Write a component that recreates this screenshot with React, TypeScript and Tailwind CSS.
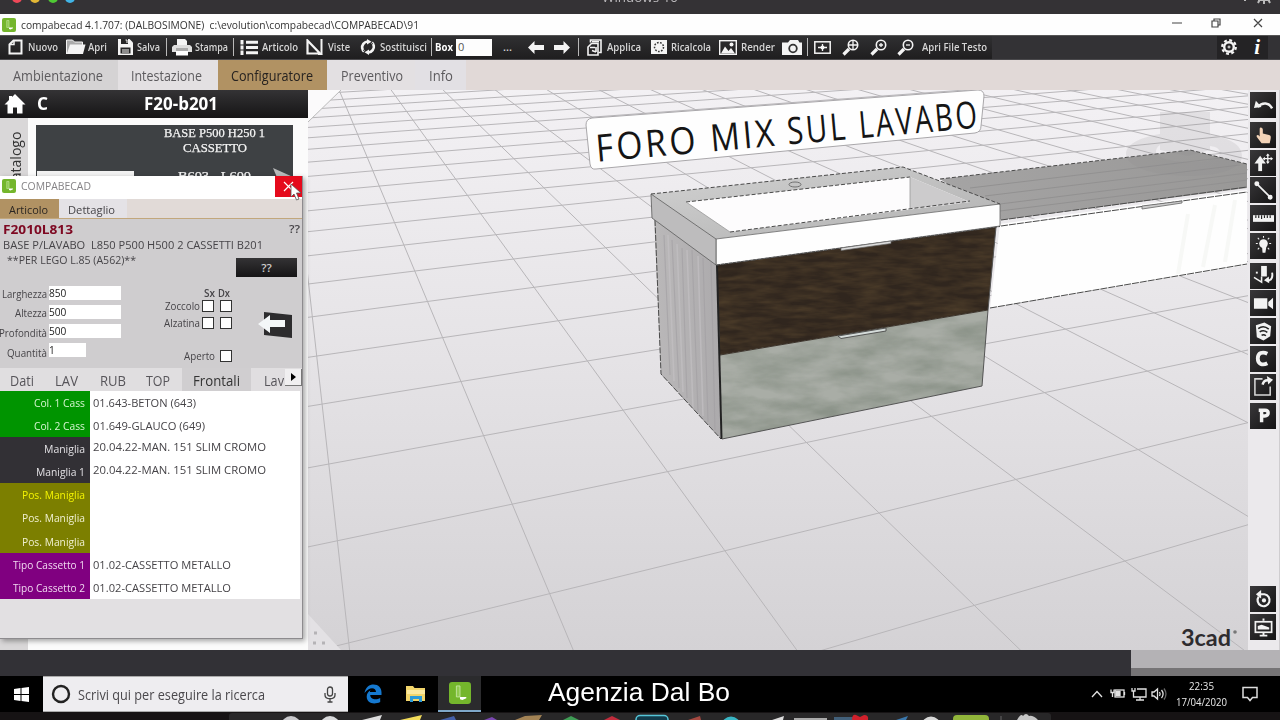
import React, { useLayoutEffect, useRef, useState } from "react";

type Kids = { children?: React.ReactNode };

/* One-line label condensed or stretched to a fixed width. */
function Fit({ w, children, className = "" }: { w: number; children: string; className?: string }) {
  const ref = useRef<HTMLSpanElement>(null);
  const [k, setK] = useState(1);
  useLayoutEffect(() => {
    if (ref.current && ref.current.offsetWidth) setK(w / ref.current.getBoundingClientRect().width);
  }, []);
  return (
    <span className={"inline-block shrink-0 whitespace-pre " + className} style={{ width: w }}>
      <span ref={ref} className="inline-block origin-left" style={{ transform: `scaleX(${k})` }}>
        {children}
      </span>
    </span>
  );
}

function Ico({ w, h, children, className = "" }: Kids & { w: number; h: number; className?: string }) {
  return (
    <svg width={w} height={h} viewBox={`0 0 ${w} ${h}`} className={"shrink-0 " + className} fill="none" stroke="#f4f4f4" strokeWidth="2">
      {children}
    </svg>
  );
}

function AppLogo({ className = "" }: { className?: string }) {
  return (
    <svg viewBox="0 0 14 14" className={"shrink-0 " + className}>
      <rect width="14" height="14" rx="2" fill="#74b62c" />
      <path d="M4.700 2.500H7V9.500H4.700z" fill="#8fca4e" stroke="#cfeab0" strokeWidth=".5" />
      <path d="M7 9.500h4v.8L8.500 11.500 7 11z" fill="#fff" />
    </svg>
  );
}

/* ---------- toolbar ---------- */

function Sep() {
  return <div className="h-[18px] w-px shrink-0 bg-[#b9b9b9]" />;
}

function Cell({ w, children }: Kids & { w: string }) {
  return <div className={"flex h-full shrink-0 items-center " + w}>{children}</div>;
}

function Magnifier({ kind }: { kind: string }) {
  return (
    <Ico w={17} h={17}>
      <path d="M1.500 15.500L7 10" strokeWidth="3.200" />
      <circle cx="11" cy="6" r="4.700" strokeWidth="1.600" />
      <path d={kind === "all" ? "M11 2v8M7 6h8" : kind === "in" ? "M11 4v4M9 6h4" : "M9 6h4"} strokeWidth="1.300" />
    </Ico>
  );
}

function Toolbar() {
  return (
    <div className="flex h-[25px] items-center border-t border-b border-t-[#555] border-b-[#4a494c] bg-[#333235] text-[11px] font-semibold text-[#d6d6d6]">
      <div className="flex h-full w-[992px] shrink-0 items-center bg-linear-to-b from-[#303032] to-[#1f1e1f] pb-px pl-2">
        <Cell w="w-[20px]">
          <Ico w={15} h={16}><path d="M5.500 1.500H13.500V14.500H1.500V5.500z" /><path d="M2 5.500h4V2" strokeWidth="1.500" /></Ico>
        </Cell>
        <Cell w="w-[38px]"><Fit w={30}>Nuovo</Fit></Cell>
        <Cell w="w-[22px]">
          <Ico w={20} h={16}><path d="M.5 15V1h6l2 2h8v3" strokeWidth="1" fill="#aaa" /><path d="M.8 15L4 5.500h15.500L17 15z" fill="#f4f4f4" stroke="none" /></Ico>
        </Cell>
        <Cell w="w-[30px]"><Fit w={19}>Apri</Fit></Cell>
        <Cell w="w-[19px]">
          <Ico w={15} h={16}><path d="M0 0h11.500L15 3.500V16H0z" fill="#f4f4f4" stroke="none" /><path d="M3 0h7v5H3zM2.500 8.500h10v6h-10z" fill="#262627" stroke="none" /><path d="M7.500 1h1.500v3M4 11h7M4 13h7" strokeWidth="1" /></Ico>
        </Cell>
        <Cell w="w-[29px]"><Fit w={23}>Salva</Fit></Cell>
        <Cell w="w-[6px]"><Sep /></Cell>
        <Cell w="w-[23px]">
          <Ico w={20} h={17}><path d="M5 0h8l2 2v5H5z" fill="#f4f4f4" stroke="none" /><path d="M2 6h16l2 2v5H0V8z" fill="#dedede" stroke="none" /><path d="M4 9h12v5H4z" fill="#aaa" stroke="none" /><path d="M4 12h12v4.500H4z" fill="#fff" stroke="none" /></Ico>
        </Cell>
        <Cell w="w-[38px]"><Fit w={33}>Stampa</Fit></Cell>
        <Cell w="w-[7px]"><Sep /></Cell>
        <Cell w="w-[22px]">
          <Ico w={18} h={15}><path d="M6 2.200h12M6 7.500h12M6 12.800h12" strokeWidth="3" /><path d="M2 0v15" strokeWidth="3" /><path d="M0 5h4M0 10h4" stroke="#262627" strokeWidth="1" /></Ico>
        </Cell>
        <Cell w="w-[44px]"><Fit w={36}>Articolo</Fit></Cell>
        <Cell w="w-[22px]">
          <Ico w={17} h={16}><path d="M1.500 1.500L14 14.500H1.500z" strokeWidth="2.200" /><path d="M15.500 0v15H12" strokeWidth="2" /></Ico>
        </Cell>
        <Cell w="w-[32px]"><Fit w={22}>Viste</Fit></Cell>
        <Cell w="w-[20px]">
          <Ico w={16} h={16}><path d="M2.200 9.500A6 6 0 0 1 7.500 2.500M13.800 6.500A6 6 0 0 1 8.500 13.500M4 12.500A6 6 0 0 1 2.200 9M12 3.500A6 6 0 0 1 13.800 7" strokeWidth="2.600" /><path d="M7 0l4.500 2.700L7 5.500zM9 10.500L4.500 13.300 9 16z" fill="#f4f4f4" stroke="none" /><path d="M3 11.500l3-1.500M13 4.500l-3 1.500" stroke="#262627" strokeWidth="1" /></Ico>
        </Cell>
        <Cell w="w-[51px]"><Fit w={47}>Sostituisci</Fit></Cell>
        <Cell w="w-[4px]"><Sep /></Cell>
        <Cell w="w-[21px]"><Fit w={18} className="font-bold text-white">Box</Fit></Cell>
        <Cell w="w-[47px]">
          <div className="flex h-[17px] w-[36px] items-center bg-[#fdfdfd] pl-0.5 font-normal text-[#555]">0</div>
        </Cell>
        <Cell w="w-[25px]">...</Cell>
        <Cell w="w-[26px]">
          <Ico w={16} h={13}><path d="M0 6.500L6.500 0v4H16v5H6.500v4z" fill="#f4f4f4" stroke="none" /></Ico>
        </Cell>
        <Cell w="w-[24px]">
          <Ico w={16} h={13}><path d="M16 6.500L9.500 0v4H0v5h9.500v4z" fill="#f4f4f4" stroke="none" /></Ico>
        </Cell>
        <Cell w="w-[9px]"><Sep /></Cell>
        <Cell w="w-[20px]">
          <Ico w={15} h={17}><path d="M3.500 3.500V1H14v12.500h-2.500" strokeWidth="1.600" /><path d="M1 8l3.500-3.500H11V16H1z" strokeWidth="1.600" /><path d="M3 8.500h5M9 8v5M5 11.500l4 1.500M5 2.700h7" strokeWidth="1.600" /></Ico>
        </Cell>
        <Cell w="w-[44px]"><Fit w={34}>Applica</Fit></Cell>
        <Cell w="w-[20px]">
          <Ico w={16} h={14}><rect width="16" height="14" fill="#f4f4f4" stroke="none" /><circle cx="8" cy="7" r="4.500" stroke="#333" strokeWidth="1.500" strokeDasharray="1.700 1.400" /></Ico>
        </Cell>
        <Cell w="w-[48px]"><Fit w={40}>Ricalcola</Fit></Cell>
        <Cell w="w-[22px]">
          <Ico w={18} h={15}><rect x=".7" y=".7" width="16.600" height="13.600" strokeWidth="1.400" /><path d="M2 13.500l4-7 3.500 4.500 2.500-3 4 5.500z" fill="#f4f4f4" stroke="none" /><circle cx="12.500" cy="4.500" r="2" fill="#f4f4f4" stroke="none" /></Ico>
        </Cell>
        <Cell w="w-[41px]"><Fit w={34}>Render</Fit></Cell>
        <Cell w="w-[25px]">
          <Ico w={20} h={15}><path d="M0 2.500h6L8 0h8l1.500 2.500H20V15H0z" fill="#f4f4f4" stroke="none" /><circle cx="11" cy="8.500" r="3.800" stroke="#333" strokeWidth="1.800" /></Ico>
        </Cell>
        <Cell w="w-[7px]"><Sep /></Cell>
        <Cell w="w-[28px]">
          <Ico w={17} h={13}><rect x=".8" y=".8" width="15.400" height="11.400" strokeWidth="1.500" /><path d="M8.500 3v7M4 6.500h9" strokeWidth="1.300" /><circle cx="8.500" cy="6.500" r="2" fill="#f4f4f4" stroke="none" /></Ico>
        </Cell>
        <Cell w="w-[28px]"><Magnifier kind="all" /></Cell>
        <Cell w="w-[27px]"><Magnifier kind="in" /></Cell>
        <Cell w="w-[25px]"><Magnifier kind="out" /></Cell>
        <Fit w={65}>Apri File Testo</Fit>
      </div>
      <div className="flex-1" />
      <div className="mr-3 flex h-full w-[51px] items-center justify-between bg-[#242325] pr-[8px] pb-px pl-[4px]">
        <Ico w={16} h={16}><circle cx="8" cy="8" r="4.800" strokeWidth="2.400" /><circle cx="8" cy="8" r="6.800" strokeWidth="2.200" strokeDasharray="2.900 2.440" /><circle cx="8" cy="8" r="1" strokeWidth="1" /></Ico>
        <span className="font-['Liberation_Serif',serif] text-[21px] leading-none font-bold text-white italic">i</span>
      </div>
    </div>
  );
}

function MenuTabs() {
  return (
    <div className="flex h-[30px] bg-[#e1d9d7] text-[14px] text-[#5c5a5d]">
      <div className="flex w-[118px] items-center bg-[#d5d3d4] pl-[13px]"><Fit w={90}>Ambientazione</Fit></div>
      <div className="flex w-[100px] items-center bg-[#e3e0e2] pl-[13px]"><Fit w={71}>Intestazione</Fit></div>
      <div className="flex w-[109px] items-center bg-[#b19263] pl-[13px] text-[#262220]"><Fit w={82}>Configuratore</Fit></div>
      <div className="flex w-[88px] items-center bg-[#e3e0e2] pl-[14px]"><Fit w={62}>Preventivo</Fit></div>
      <div className="flex w-[51px] items-center bg-[#e2e0e4] pl-[14px]"><Fit w={24}>Info</Fit></div>
    </div>
  );
}

/* ---------- 3D viewport ---------- */

const HORIZON = -80;

function floorLines() {
  const out: string[] = [];
  const vx = 268;
  for (let k = -1; k < 22; k++) {
    const x640 = 348.5 + 220.5 * k;
    const s = (x640 - vx) / (640 - HORIZON);
    out.push(`M${(vx + s * 165).toFixed(1)} 85L${(vx + s * 740).toFixed(1)} 660`);
  }
  const ax = 3300;
  for (let m = -24; m < 4; m++) {
    const d = 1000 / (2.008 - 0.2535 * m);
    const s = d / (ax - 580);
    out.push(`M300 ${(HORIZON + s * (ax - 300)).toFixed(1)}L1260 ${(HORIZON + s * (ax - 1260)).toFixed(1)}`);
  }
  return out.join("");
}

const caption = [
  { t: "FORO", x: -2, w: 103 },
  { t: "MIX", x: 113, w: 67 },
  { t: "SUL", x: 190, w: 61 },
  { t: "LAVABO", x: 262, w: 121 },
];

function Viewport() {
  const dash = { stroke: "#4a4a4a", strokeWidth: 1, strokeDasharray: "4 2", fill: "none" };
  return (
    <svg width="940" height="560" viewBox="308 90 940 560" className="shrink-0">
      <defs>
        <linearGradient id="floor" x1="0" y1="0" x2="0" y2="1">
          <stop offset="0" stopColor="#f3f1f4" /><stop offset=".45" stopColor="#e6e4e7" /><stop offset="1" stopColor="#d4d2d5" />
        </linearGradient>
        <linearGradient id="top" x1="0" y1="0" x2="1" y2="0">
          <stop offset="0" stopColor="#a5a4a4" /><stop offset="1" stopColor="#999897" />
        </linearGradient>
        <linearGradient id="side" x1="0" y1="0" x2="1" y2="0">
          <stop offset="0" stopColor="#bab8b9" /><stop offset="1" stopColor="#acaaac" />
        </linearGradient>
        <linearGradient id="slab" x1="0" y1="0" x2="1" y2="1">
          <stop offset="0" stopColor="#d2d2d2" /><stop offset="1" stopColor="#b0b0b0" />
        </linearGradient>
        <filter id="woodDark" x="0" y="0" width="1" height="1" colorInterpolationFilters="sRGB">
          <feTurbulence type="fractalNoise" baseFrequency=".035 .16" numOctaves="3" seed="4" />
          <feColorMatrix values="0 0 0 0 .34  0 0 0 0 .27  0 0 0 0 .18  1.200 0 0 0 -.35" />
          <feComposite in2="SourceGraphic" operator="in" result="n" />
          <feMerge><feMergeNode in="SourceGraphic" /><feMergeNode in="n" /></feMerge>
        </filter>
        <filter id="woodLight" x="0" y="0" width="1" height="1" colorInterpolationFilters="sRGB">
          <feTurbulence type="fractalNoise" baseFrequency=".02 .06" numOctaves="4" seed="9" />
          <feColorMatrix values="0 0 0 0 .54  0 0 0 0 .57  0 0 0 0 .53  1.800 0 0 0 -.55" />
          <feComposite in2="SourceGraphic" operator="in" result="n" />
          <feMerge><feMergeNode in="SourceGraphic" /><feMergeNode in="n" /></feMerge>
        </filter>
      </defs>
      <rect x="308" y="90" width="940" height="560" fill="url(#floor)" />
      <path d={floorLines()} stroke="#b8b6b9" strokeWidth="1" fill="none" />
      <path d="M308 90H341L308 122z" fill="#fbfafb" /><path d="M341 90L308 122" stroke="#bbb" />
      <path d="M308 614L341 650H308z" fill="#e3e1e4" />
      <path d="M314 633h3M313 643h3M322 643h3" stroke="#b5b3b6" strokeWidth="3" />

      {/* wall unit on the right */}
      <path d="M1000 224L1247 190V265L990 308z" fill="#fefefe" />
      <path d="M940 179L1190 150L1247 164V188L1001 220z" fill="url(#top)" />
      <path d="M985 196L1240 165M1000 204L1247 173M1000 211L1247 180M970 188L1220 158" stroke="#929191" strokeWidth="1" />
      <path d="M940 179L1190 150L1247 164" {...dash} />
      <path d="M1001 220L1247 187M1001 226L1247 192M990 308L1247 264" {...dash} strokeDasharray="7 1" />
      <path d="M1142 209l40-6v-2l-40 5z" fill="#ccc" stroke="#666" strokeWidth=".8" />
      <path d="M1188 214l-10 60M1215 205l-12 62M1235 200l-10 62" stroke="#f7f8f6" strokeWidth="4" />

      {/* orientation cube */}
      <g fill="#8b898c" opacity=".15">
        <path d="M1160 112h50v38l-22 6-28-6z" /><path d="M1160 112h25v42l-25-5z" />
        <path d="M1160 134c-24 4-34 12-34 20 0 14 30 22 64 22s52-9 52-20-12-18-32-21v11c8 1 10 4 10 7 0 6-14 9-30 9s-34-4-34-10c0-3 1-5 4-7z" />
      </g>

      {/* washbasin unit */}
      <path d="M654 215L717 262L721 439L661 374z" fill="url(#side)" />
      <path d="M664 235l6 140M672 240l7 148M682 248l5 150M692 250l6 162M703 258l5 164M711 262l4 168" stroke="#a19ea2" strokeWidth="1.200" opacity=".6" />
      <path d="M668 235l6 146M677 244l6 148M687 250l6 158M698 256l5 160" stroke="#c3c0c3" strokeWidth="1.500" opacity=".7" />
      <path d="M655 220L661 374L721 439" {...dash} strokeDasharray="6 1.500" />
      <path d="M717 265L996 227L988 310L720 355z" fill="#30261e" filter="url(#woodDark)" />
      <path d="M720 355L988 310L982 386L722 439z" fill="#a9ada6" filter="url(#woodLight)" />
      <path d="M717 265L721.500 439" stroke="#222" strokeWidth="2" />
      <path d="M996 227L988 310L982 386L722 439" stroke="#555" fill="none" strokeWidth="1" />
      <path d="M720 355L988 310" stroke="#3d352d" strokeWidth="1" />
      <path d="M651 194L903 167L1000 204L716 239z" fill="url(#slab)" />
      <path d="M686 202L910 177L970 202L730 232z" fill="#fdfcfd" />
      <path d="M910 177L970 202L910 209z" fill="#cccbcc" />
      <path d="M716 239L1000 204V226L716 265z" fill="#fefefe" stroke="#666" strokeWidth=".8" />
      <path d="M651 194L716 239V265L652 218z" fill="#bdbcbd" stroke="#666" strokeWidth=".9" />
      <path d="M651 194L903 167L1000 204M686 202L910 177M730 232L970 201" {...dash} />
      <path d="M686 202L730 232M910 177v31" stroke="#999" strokeWidth=".8" />
      <ellipse cx="795" cy="184.500" rx="6" ry="2.500" fill="#c4c4c4" stroke="#666" strokeWidth=".9" />
      <path d="M717 265L1000 226.500" {...dash} strokeDasharray="3 1" />
      <path d="M841 248l50-7v2.500l-50 7z" fill="#ddd" stroke="#666" strokeWidth=".7" />
      <path d="M838 336l48-8v3l-45 7.500z" fill="#d5dcda" stroke="#4a4a48" strokeWidth=".9" />

      {/* floating caption */}
      <path d="M592 118L978 90Q984 90 984 96L981 126Q981 132 975 133L596 169Q591 170 590 164L586 125Q586 119 592 118z" fill="#fefefe" stroke="#a9a7aa" strokeWidth="1" />
      <g transform="translate(599 161.500) rotate(-5.100)">
        {caption.map((c) => (
          <text key={c.t} x={c.x} y="0" textLength={c.w} lengthAdjust="spacingAndGlyphs" letterSpacing="3.500" fontSize="37.500" fill="#151515" fontFamily="'Open Sans','Noto Sans',sans-serif">
            {c.t}
          </text>
        ))}
      </g>

      {/* 3cad mark */}
      <text x="1181" y="646" textLength="50" lengthAdjust="spacingAndGlyphs" fontSize="22" fontWeight="700" fill="#2e2c2f" fontFamily="Lato,sans-serif">3cad</text>
      <circle cx="1235" cy="632" r="1.800" fill="#777" />
    </svg>
  );
}

/* ---------- side rail ---------- */

function RailBtn({ children, gap = "mt-[1.7px]" }: Kids & { gap?: string }) {
  return (
    <div className={"flex h-[26px] w-[26px] shrink-0 items-center justify-center bg-linear-to-br from-[#39383a] to-[#151415] " + gap}>
      <svg width="21" height="21" viewBox="0 0 22 22" fill="none" stroke="#f2f2f2" strokeWidth="2">{children}</svg>
    </div>
  );
}

function Rail() {
  return (
    <div className="flex w-8 shrink-0 flex-col border-r border-[#cfcdd0] bg-[#ebe9ec] pl-0.5">
      <RailBtn gap="mt-[2px]"><path d="M5 12.500C10 7 17 8 20 14" strokeWidth="2.600" /><path d="M1 13.500L3 6l6 6.500z" fill="#f2f2f2" stroke="none" /></RailBtn>
      <RailBtn gap="mt-[4px]"><path d="M8 2.500c1.700 0 2.300 1 2.300 2.500v4l6.500 1.500c2 .5 2 2 1.700 4L17.500 19H9L4 12.500c-.8-1.500.6-2.500 2-1.500l1 1V5c0-1.500 0-2.500 1-2.500z" fill="#f3d3b8" stroke="none" /></RailBtn>
      <RailBtn><path d="M7.500 20V10" strokeWidth="4" /><path d="M1.500 12L7.500 4l6 8z" fill="#f2f2f2" stroke="none" /><path d="M15.500 2.500v9M11 7h9" strokeWidth="1.400" /><path d="M13.500 4l2-2.500 2 2.500zM13.500 10l2 2.500 2-2.500zM12.500 5L10 7l2.500 2zM18.500 5L21 7l-2.500 2z" fill="#f2f2f2" stroke="none" /></RailBtn>
      <RailBtn><path d="M4 4L18 18" strokeWidth="1.800" /><circle cx="4" cy="4" r="1.600" fill="#f2f2f2" /><circle cx="18" cy="18" r="1.600" fill="#f2f2f2" /></RailBtn>
      <RailBtn><path d="M0 7.500h22v7H0z" fill="#f2f2f2" stroke="none" /><path d="M3 7.500v3M6 7.500v3M9 7.500v4M12 7.500v3M15 7.500v3M18 7.500v3" stroke="#222" strokeWidth="1.200" /></RailBtn>
      <RailBtn><circle cx="11" cy="9" r="4.500" fill="#f2f2f2" stroke="none" /><path d="M9.500 12h4.500l-1 6.500h-3z" fill="#f2f2f2" stroke="none" /><path d="M3 9h2M17 9h2M5 3l1.500 1.500M17 3l-1.500 1.500M5 15l1.500-1.500M17 15l-1.500-1.500M11 1v2" strokeWidth="1.100" /></RailBtn>
      <RailBtn gap="mt-[4px]"><path d="M8.500 1h6v11h-6z" fill="#f2f2f2" stroke="none" /><path d="M1 13l8 5V12" strokeWidth="1.600" /><path d="M20 8c1 5-1 8-5 9" strokeWidth="2" /><path d="M11.500 16l5-4 .5 7z" fill="#f2f2f2" stroke="none" /><path d="M3 8h2" /></RailBtn>
      <RailBtn><path d="M1 5.500h14v11H1zM16 9.500L21 5v12l-5-4z" fill="#f2f2f2" stroke="none" /></RailBtn>
      <RailBtn><path d="M3 4.500L12 1.500l7 4-1 10.500-7 4.500-7-3.500z" fill="#f2f2f2" stroke="none" /><path d="M5.500 8c4-3 8-2 11 .5M7 11.500c3-2 5.500-1.500 8 .5M9 15c1.500-1 3-.8 4.500.5" stroke="#222" strokeWidth="1.600" /></RailBtn>
      <RailBtn><path d="M15 6C10 3.500 5 5 5 11s5 7.500 10 5" strokeWidth="4" /></RailBtn>
      <RailBtn><path d="M10 3H2v17h16V11" strokeWidth="1.600" stroke="#d8d8d8" /><path d="M10 9c1-3.500 3.500-5 6.500-4.500" strokeWidth="2.600" /><path d="M14.500 0L21 4l-5 5z" fill="#f2f2f2" stroke="none" /></RailBtn>
      <RailBtn gap="mt-[3px]"><path d="M9 18V5.500h3.500c4.500 0 4.500 6 0 6H9M6 5.500h3" strokeWidth="3.600" /></RailBtn>
      <div className="flex-1" />
      <RailBtn><path d="M6 8a6.300 6.300 0 1 0 6-2.500H7" strokeWidth="2.300" /><path d="M8.500 1v9L3 5.500z" fill="#f2f2f2" stroke="none" /><circle cx="11.500" cy="12" r="2.200" fill="#f2f2f2" stroke="none" /></RailBtn>
      <RailBtn><rect x="2.500" y="5" width="17" height="11" strokeWidth="1.800" /><path d="M5 13V9.500l4-1.500 8 3V13z" fill="#f2f2f2" stroke="none" /><path d="M11 1.500V4M11 16v3M7 19.500h8" strokeWidth="2" /></RailBtn>
      <div className="h-[10px] shrink-0" />
    </div>
  );
}

/* ---------- catalogue panel and article window ---------- */

function Catalog() {
  return (
    <div className="flex h-full w-[308px] shrink-0 flex-col bg-[#fbfbfb]">
      <div className="flex h-7 items-center bg-linear-to-b from-[#343335] to-[#161516] text-[17px] font-bold text-white">
        <svg width="22" height="20" viewBox="0 0 22 20" className="ml-1"><path d="M11 0l10.500 10.500H18.500V19.500H13v-6H9v6H3.500V10.500H.5L5 6V2h3v1z" fill="#fff" /></svg>
        <div className="ml-[11px] w-[107px]"><Fit w={11}>C</Fit></div>
        <Fit w={74}>F20-b201</Fit>
      </div>
      <div className="flex min-h-0 flex-1">
        <div className="flex w-7 justify-center overflow-hidden bg-[#d9d7d8] pt-[9px] pl-1 text-[14px] leading-[16px] text-[#333]">
          <span className="h-[62px] rotate-180 [writing-mode:vertical-rl]">Catalogo</span>
        </div>
        <div className="flex-1 pt-[7px] pl-2">
          <div className="flex h-[70px] w-[257px] bg-[#3e4144]">
            <div className="mt-[46px] ml-px h-[10px] w-[97px] shrink-0 bg-[#f2f2f2]" />
            <div className="ml-[30px] flex w-[101px] shrink-0 flex-col items-center pt-px font-['Liberation_Serif',serif] text-[12.500px] leading-[15px] text-[#f4f4f4] [-webkit-text-stroke:0.25px_#f4f4f4]">
              <Fit w={101}>BASE P500 H250 1</Fit>
              <Fit w={64}>CASSETTO</Fit>
              <Fit w={73} className="mt-[13px]">B603 - L600</Fit>
            </div>
            <svg width="22" height="14" viewBox="0 0 22 14" className="mt-[43px] ml-[6px] shrink-0"><path d="M2 0L22 9L8 14z" fill="#b9babb" /></svg>
          </div>
        </div>
      </div>
    </div>
  );
}

function Check() {
  return <span className="block size-3 shrink-0 border border-[#333] bg-white" />;
}

function Field({ label, lw, value, pad, box }: { label: string; lw: number; value: string; pad: string; box: string }) {
  return (
    <div className="flex h-[19px] items-start">
      <div className={"flex w-[49px] shrink-0 justify-end pr-0.5 leading-[14px] " + pad}><Fit w={lw}>{label}</Fit></div>
      <div className={"flex h-[14px] items-center bg-white text-[11px] text-[#222] " + box}><Fit w={value.length * 5.8}>{value}</Fit></div>
    </div>
  );
}

const rows = [
  { n: "Col. 1 Cass", nw: 51, v: "01.643-BETON (643)", vw: 103, c: "bg-[#009400] text-[#d5f5d0]" },
  { n: "Col. 2 Cass", nw: 51, v: "01.649-GLAUCO (649)", vw: 112, c: "bg-[#009400] text-[#d5f5d0]" },
  { n: "Maniglia", nw: 41, v: "20.04.22-MAN. 151 SLIM CROMO", vw: 173, c: "bg-[#323035] text-[#e2e0e4]", up: true },
  { n: "Maniglia 1", nw: 49, v: "20.04.22-MAN. 151 SLIM CROMO", vw: 173, c: "bg-[#323035] text-[#e2e0e4]", up: true },
  { n: "Pos. Maniglia", nw: 63, v: "", vw: 0, c: "bg-[#7c7f00] text-[#f4f400]" },
  { n: "Pos. Maniglia", nw: 63, v: "", vw: 0, c: "bg-[#7c7f00] text-[#f0f0d0]" },
  { n: "Pos. Maniglia", nw: 63, v: "", vw: 0, c: "bg-[#7c7f00] text-[#f0f0d0]" },
  { n: "Tipo Cassetto 1", nw: 72, v: "01.02-CASSETTO METALLO", vw: 138, c: "bg-[#800080] text-[#f0d8f0]" },
  { n: "Tipo Cassetto 2", nw: 72, v: "01.02-CASSETTO METALLO", vw: 138, c: "bg-[#800080] text-[#f0d8f0]" },
];

function ArticleWindow() {
  return (
    <div className="absolute top-[86px] left-0 flex h-[463px] w-[303px] flex-col border-r border-b border-[#8d8b8e] bg-[#e2e0e2] text-[11.500px] text-[#464448] shadow-[2px_2px_5px_rgba(0,0,0,.35)]">
      <div className="flex h-[23px] shrink-0 items-start bg-white pt-[3px] pl-0.5">
        <AppLogo className="size-[14px]" />
        <div className="ml-[5px] flex-1 leading-[14px] text-[#858386]"><Fit w={70}>COMPABECAD</Fit></div>
        <div className="-mt-[3px] flex h-[21px] w-[27px] items-center justify-center bg-[#e50a1c]">
          <svg width="11" height="11" viewBox="0 0 11 11" stroke="#fff" strokeWidth="1.200"><path d="M1 1l9 9M10 1l-9 9" /></svg>
        </div>
      </div>
      <div className="flex h-[20px] shrink-0 border-b border-[#c2a77c] bg-[#e1dad7]">
        <div className="flex w-[59px] items-center bg-[#b19263] pt-[3px] pl-[9px] text-[#2b2622]"><Fit w={39}>Articolo</Fit></div>
        <div className="flex w-[68px] items-center bg-[#e4e2e6] pt-[3px] pl-[9px]"><Fit w={47}>Dettaglio</Fit></div>
      </div>
      <div className="flex h-[149px] shrink-0 flex-col bg-[#cfcdcf]">
        <div className="flex h-[18px] items-center justify-between pr-[2px] pl-[3px] pt-1">
          <Fit w={70} className="text-[13px] font-bold text-[#7e0822]">F2010L813</Fit>
          <Fit w={11} className="-mt-[3px] font-semibold">??</Fit>
        </div>
        <div className="flex h-4 items-center pl-[3px]"><Fit w={260}>BASE P/LAVABO  L850 P500 H500 2 CASSETTI B201</Fit></div>
        <div className="flex h-[15px] items-center pb-px pl-[7px]"><Fit w={129}>**PER LEGO L.85 (A562)**</Fit></div>
        <div className="-mt-[10px] flex justify-end pr-[5px]">
          <div className="flex h-[19px] w-[61px] items-center justify-center bg-linear-to-b from-[#343335] to-[#161516] font-semibold text-[#ccc]">??</div>
        </div>
        <div className="flex pt-[9px]">
          <div className="w-[160px] shrink-0 overflow-hidden">
            <Field label="Larghezza" lw={45} value="850" pad="pt-[1px]" box="w-[72px]" />
            <Field label="Altezza" lw={32} value="500" pad="pt-[1px]" box="w-[72px]" />
            <Field label="Profondità" lw={48} value="500" pad="pt-[2px]" box="w-[72px]" />
            <Field label="Quantità" lw={40} value="1" pad="pt-[3px]" box="w-[37px]" />
          </div>
          <div className="w-[71.500px] shrink-0">
            <div className="flex h-[13px] items-center gap-[3px] pt-px pl-[44px] font-semibold"><Fit w={11}>Sx</Fit><Fit w={12}>Dx</Fit></div>
            <div className="-mt-px flex h-[15px] items-center justify-end gap-[6px]"><Fit w={35} className="-mr-1">Zoccolo</Fit><Check /><Check /></div>
            <div className="mt-px flex h-[18px] items-center justify-end gap-[6px]"><Fit w={36} className="-mr-1">Alzatina</Fit><Check /><Check /></div>
            <div className="mt-[15px] flex h-[18px] items-center justify-end gap-[5px]"><Fit w={31}>Aperto</Fit><Check /></div>
          </div>
          <svg width="38" height="30" viewBox="0 0 38 30" className="mt-[24px] ml-[25px]">
            <path d="M7 2l28 3v23L7 25z" fill="#2d2c2e" /><path d="M1 14l12-9v5h15v7H13v6z" fill="#f4f7f8" />
          </svg>
        </div>
      </div>
      <div className="flex h-[23px] shrink-0 items-center bg-[#e0dee0] text-[14px] text-[#57555a]">
        <div className="w-[45px] pt-0.5 pl-[10px]"><Fit w={24}>Dati</Fit></div>
        <div className="w-[45px] pt-0.5 pl-[10px]"><Fit w={23}>LAV</Fit></div>
        <div className="w-[46px] pt-0.5 pl-[10px]"><Fit w={26}>RUB</Fit></div>
        <div className="w-[46px] pt-0.5 pl-[10px]"><Fit w={24}>TOP</Fit></div>
        <div className="flex h-full w-[69px] items-center bg-[#d0ced0] pt-0.5 pl-[11px] text-[#333]"><Fit w={47}>Frontali</Fit></div>
        <div className="w-[34px] overflow-hidden pt-0.5 pl-[13px]"><Fit w={20}>Lav</Fit></div>
        <div className="-mt-[5px] flex size-[17px] items-center justify-center border-r border-b border-[#777] bg-[#f0eff0] text-black">
          <svg width="5" height="8" viewBox="0 0 5 8"><path d="M0 0l5 4-5 4z" /></svg>
        </div>
      </div>
      <div className="mr-[2px] flex h-[208px] shrink-0 flex-col bg-white">
        {rows.map((r, i) => (
          <div key={i} className="flex min-h-0 flex-1">
            <div className={"flex w-[90px] items-center justify-end pr-[5px] " + r.c}><Fit w={r.nw}>{r.n}</Fit></div>
            <div className={"flex items-center pl-[3px] " + (r.up ? "pb-1" : "")}>{r.v && <Fit w={r.vw}>{r.v}</Fit>}</div>
          </div>
        ))}
      </div>
    </div>
  );
}

/* ---------- desktop bars ---------- */

function Taskbar() {
  return (
    <div className="flex h-[36px] shrink-0 items-center bg-black">
      <div className="flex w-[43px] justify-center">
        <svg width="15" height="15" viewBox="0 0 15 15" fill="#fff"><path d="M0 2l6.500-1v6H0zM7.500 .9L15 0v7H7.500zM0 8h6.500v6L0 13zM7.500 8H15v7l-7.500-1z" /></svg>
      </div>
      <div className="flex h-full w-[305px] items-center border-y border-[#aaa] bg-[#eeedf0] pl-[8px]">
        <svg width="20" height="20" viewBox="0 0 20 20"><circle cx="10" cy="10" r="8" fill="none" stroke="#222" strokeWidth="2.400" /></svg>
        <div className="ml-[7px] flex-1 text-[14px] text-[#4a484c]"><Fit w={187}>Scrivi qui per eseguire la ricerca</Fit></div>
        <svg width="12" height="17" viewBox="0 0 12 17" fill="none" stroke="#444" strokeWidth="1.300" className="mr-[12px]"><rect x="3.500" y="1" width="5" height="9" rx="2.500" /><path d="M1 7v2c0 5 10 5 10 0V7M6 13v3M3.500 16h5" /></svg>
      </div>
      <div className="flex w-[49px] justify-center">
        <svg width="18" height="20" viewBox="0 0 18 20"><path d="M.5 9C1.500 3 5.500.5 9.500.5c5 0 8 3.500 8 8V11H6.200c.3 4.800 6.300 5.300 10 3v4c-6 3-13.500 1.500-13.500-5.500 0-3 1.700-5 4-6.200C5.500 7.500 6 8 6 8h6c0-5-7-5.500-11.500 1z" fill="#1579d0" /></svg>
      </div>
      <div className="flex w-[41px] justify-center pr-1">
        <svg width="20" height="18" viewBox="0 0 20 18"><path d="M0 1h7l1.500 2H19v13H0z" fill="#f2d56b" /><path d="M1 5h18v4H1z" fill="#fbe9a0" /><path d="M4 17v-6h12v6h-3v-3H7v3z" fill="#2b9bd8" /></svg>
      </div>
      <div className="flex h-full w-[43px] items-center justify-center border-b-2 border-[#7fa8c9] bg-[#2b2b2d]"><AppLogo className="size-[22px]" /></div>
      <div className="-mt-1 ml-[67px] flex-1 font-['Liberation_Sans',sans-serif] text-[25px] leading-[28px] text-white"><Fit w={182}>Agenzia Dal Bo</Fit></div>
      <svg width="78" height="16" viewBox="0 0 78 16" fill="none" stroke="#e2e2e2" strokeWidth="1.300" className="mr-[8px]">
        <path d="M2 11l5-5.500L12 11" /><rect x="25" y="4" width="9" height="7" /><path d="M26 5.500h4v4h-4z" fill="#e2e2e2" /><path d="M21 3.500v3h3v-3M22.500 6v5M34.500 6v3" />
        <path d="M47 3h9v8H43.500V7.500M50 11v3M46 14h8M42 2v3h3V2M43.500 5v3" /><path d="M62 6h2l3.500-3v10L64 10h-2zM69.500 6c1 1.500 1 2.500 0 4M71.500 4c2 2.500 2 5.500 0 8" /><path d="M74 2.500c2.500 3.500 2.500 7.500 0 11" stroke="#666" />
      </svg>
      <div className="flex w-[51px] flex-col items-center text-[11px] leading-[16px] text-[#e8e8e8]"><Fit w={25}>22:35</Fit><Fit w={51}>17/04/2020</Fit></div>
      <svg width="16" height="16" viewBox="0 0 16 16" className="mr-[22px] ml-[15px]" fill="none" stroke="#ddd" strokeWidth="1.500"><path d="M1 1.500h14v10h-4.500L8 14.500 5.500 11.500H1z" /></svg>
    </div>
  );
}

function Dock() {
  return (
    <div className="h-2 shrink-0 overflow-hidden bg-[#161314]">
      <svg width="1280" height="8" viewBox="0 0 1280 8">
        <path d="M229 8V4q0-3 3-3H1048q3 0 3 3v4z" fill="#282728" />
        <circle cx="291" cy="14" r="10" fill="#c9c9cc" /><circle cx="330" cy="14" r="10" fill="#d9d9db" />
        <path d="M362 8l20-5-2 5z" fill="#ddd" /><path d="M400 8l22-5-2 5z" fill="#f2dc5a" /><path d="M440 8l14-4 2 4z" fill="#4560a8" /><path d="M484 8l8-3 5 3z" fill="#7a48b0" /><path d="M515 8l10-4 17-1-3 5z" fill="#a38355" /><path d="M563 8l8-4 8 4z" fill="#3f9c55" /><path d="M604 8l8-4 8 4z" fill="#c12c3c" />
        <rect x="636" y="3.500" width="32" height="12" rx="4" fill="#123b4b" stroke="#55c5d8" strokeWidth="1.500" />
        <path d="M688 8l12-4 1 4z" fill="#a54840" /><circle cx="731" cy="14" r="9.500" fill="#39b5c4" /><path d="M772 8l12-4-1 4z" fill="#ddd" /><path d="M794 6h33v2h-33z" fill="#aaa" /><path d="M834 5h20v3h-20z" fill="#42607a" /><path d="M852 8q0-6 4-5l4 2 4-2q5 0 4 5z" fill="#d0202b" /><path d="M896 8l12-4-2 4z" fill="#3b78ad" /><circle cx="931" cy="14" r="9.500" fill="#d8d8d8" />
        <rect x="953" y="3" width="36" height="12" rx="4" fill="#91b53a" /><path d="M1001 4v4" stroke="#666" /><path d="M1017 8q4-7 6-4 3-4 6 0 4-1 9 4z" fill="#c5c5c5" />
      </svg>
    </div>
  );
}

export default function App() {
  return (
    <div className="flex h-[720px] w-[1280px] flex-col overflow-hidden bg-black font-['Open_Sans','Noto_Sans',sans-serif]">
      <div className="flex h-[14px] shrink-0 items-start overflow-hidden bg-[#343235]">
        <svg width="90" height="6" viewBox="0 0 90 6"><circle cx="17" cy="-2" r="5" fill="#f04858" /><circle cx="35" cy="-2" r="5" fill="#e3b735" /><circle cx="53" cy="-2" r="5" fill="#4fc934" /><circle cx="70" cy="-2" r="5" fill="#41b4e6" /></svg>
        <div className="-mt-[11px] ml-[512px] flex-1 text-[13px] leading-[16px] text-[#bab8bb]"><Fit w={76}>Windows 10</Fit></div>
        <svg width="40" height="6" viewBox="0 0 40 6" className="mr-1" stroke="#bbb" strokeWidth="2"><path d="M28-1v5M24-1l-2 4M32-1l2 4M22 0h12M9 0v1" /></svg>
      </div>
      <div className="flex h-[21px] shrink-0 items-center bg-[#fefefe] pl-0.5 text-[11.500px] text-[#333]">
        <AppLogo className="size-[14px]" />
        <div className="ml-[5px] flex-1"><Fit w={398}>compabecad 4.1.707: (DALBOSIMONE)  c:\evolution\compabecad\COMPABECAD\91</Fit></div>
        <svg width="94" height="12" viewBox="0 0 94 12" fill="none" stroke="#444" strokeWidth="1.200" className="-mt-[3px] mr-[14px]">
          <path d="M0 6h10M40 4h6v6h-6zM42 4V2h6v6h-2M82 2l8 8M90 2l-8 8" />
        </svg>
      </div>
      <div className="shrink-0"><Toolbar /></div>
      <div className="shrink-0"><MenuTabs /></div>
      <div className="relative flex h-[560px] shrink-0">
        <Catalog />
        <Viewport />
        <Rail />
        <ArticleWindow />
        <svg width="12" height="18" viewBox="0 0 12 18" className="absolute top-[93px] left-[290px]"><path d="M1 1v13l3-3 2.500 6 2.500-1-2.500-6H11z" fill="#fff" stroke="#555" strokeWidth=".8" /></svg>
      </div>
      <div className="flex h-[26px] shrink-0 bg-[#323136]">
        <div className="w-[1131px]" />
        <div className="flex-1 border-b-8 border-[#767476] bg-[#b4b2b5]" />
      </div>
      <Taskbar />
      <Dock />
    </div>
  );
}
